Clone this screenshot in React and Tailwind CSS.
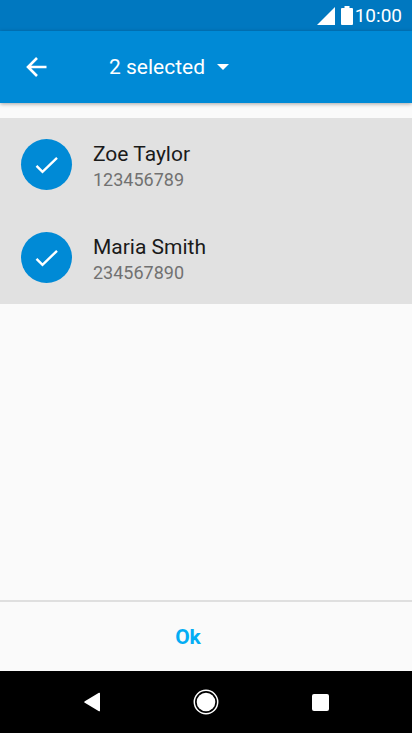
const contacts = [
  { id: 'zoe', name: 'Zoe Taylor', phone: '123456789' },
  { id: 'maria', name: 'Maria Smith', phone: '234567890' },
];

const StatusBar = () => (
  <div className="flex h-[31px] items-center justify-end bg-[#0078c0] pr-[10px] text-white">
    <svg className="mr-[6px] h-[18px] w-[18px]" viewBox="0 0 18 18" fill="currentColor">
      <path d="M18 0v18H0z" />
    </svg>
    <svg className="mr-[2px] h-[19px] w-3" viewBox="0 0 12 19" fill="currentColor">
      <path d="M3.5 0h5v2H11a1 1 0 0 1 1 1v15a1 1 0 0 1-1 1H1a1 1 0 0 1-1-1V3a1 1 0 0 1 1-1h2.5z" />
    </svg>
    <span className="text-[19px] leading-6">10:00</span>
  </div>
);

const Header = () => (
  <header className="relative flex h-[72px] items-center bg-[#008ad6] pl-6 text-white shadow-[0_1px_4px_rgba(0,0,0,0.35)]">
    <button type="button" aria-label="Back" className="mr-[61px]">
      <svg className="h-6 w-6" viewBox="0 0 24 24" fill="none" stroke="currentColor" strokeWidth="2.6">
        <path d="M22.500 12H4M13 3L4 12l9 9" />
      </svg>
    </button>
    <button type="button" className="flex items-center gap-3 text-[21px] leading-6">
      <span>2 selected</span>
      <svg className="h-[6px] w-3" viewBox="0 0 12 6" fill="currentColor">
        <path d="M0 0h12L6 6z" />
      </svg>
    </button>
  </header>
);

const ContactRow = ({ contact }) => (
  <li>
    <label htmlFor={contact.id} className="flex h-[93px] items-center gap-[21px] bg-[#e1e1e1] pl-[21px]">
      <span className="grid h-[51px] w-[51px] place-items-center">
        <input
          id={contact.id}
          type="checkbox"
          defaultChecked
          className="col-start-1 row-start-1 h-[51px] w-[51px] appearance-none rounded-full bg-gray-400 checked:bg-[#008ad6]"
        />
        <svg
          className="pointer-events-none col-start-1 row-start-1 h-[18px] w-6 text-white"
          viewBox="0 0 24 18"
          fill="none"
          stroke="currentColor"
          strokeWidth="2.400"
        >
          <path d="M1.500 9.800l6 6L22 1.800" />
        </svg>
      </span>
      <span className="flex flex-col pt-0.5">
        <span className="text-[21px] leading-7 text-[#1a1a1a]">{contact.name}</span>
        <span className="text-lg leading-6 text-[#717171]">{contact.phone}</span>
      </span>
    </label>
  </li>
);

const NavigationBar = () => (
  <nav className="flex h-[62px] items-center justify-center gap-16 bg-black text-white">
    <button type="button" aria-label="Back" className="flex w-[50px] justify-center">
      <svg className="h-5 w-4" viewBox="0 0 16 20" fill="currentColor">
        <path d="M14.500 1C15.500.4 16 .6 16 1.500V18.500C16 19.400 15.500 19.600 14.500 19L.8 10.800C0 10.300 0 9.700.8 9.200z" />
      </svg>
    </button>
    <button type="button" aria-label="Home" className="flex w-[50px] justify-center">
      <svg className="h-[26px] w-[26px]" viewBox="0 0 26 26">
        <circle cx="13" cy="13" r="11.700" fill="none" stroke="currentColor" strokeWidth="1.500" />
        <circle cx="13" cy="13" r="9.300" fill="currentColor" />
      </svg>
    </button>
    <button type="button" aria-label="Recent apps" className="flex w-[50px] justify-center">
      <span className="h-[17px] w-[17px] rounded-xs bg-white" />
    </button>
  </nav>
);

const App = () => (
  <div className="flex min-h-screen flex-col bg-[#fafafa] font-['Roboto',sans-serif]">
    <StatusBar />
    <Header />
    <main className="flex-1 pt-[15px]">
      <ul>
        {contacts.map((contact) => (
          <ContactRow key={contact.id} contact={contact} />
        ))}
      </ul>
    </main>
    <footer className="flex h-[71px] items-center justify-center border-t-2 border-[#dfdfdf] pr-9">
      <button type="button" className="text-[21px] leading-6 font-bold text-[#03adf4]">
        Ok
      </button>
    </footer>
    <NavigationBar />
  </div>
);

export default App;
